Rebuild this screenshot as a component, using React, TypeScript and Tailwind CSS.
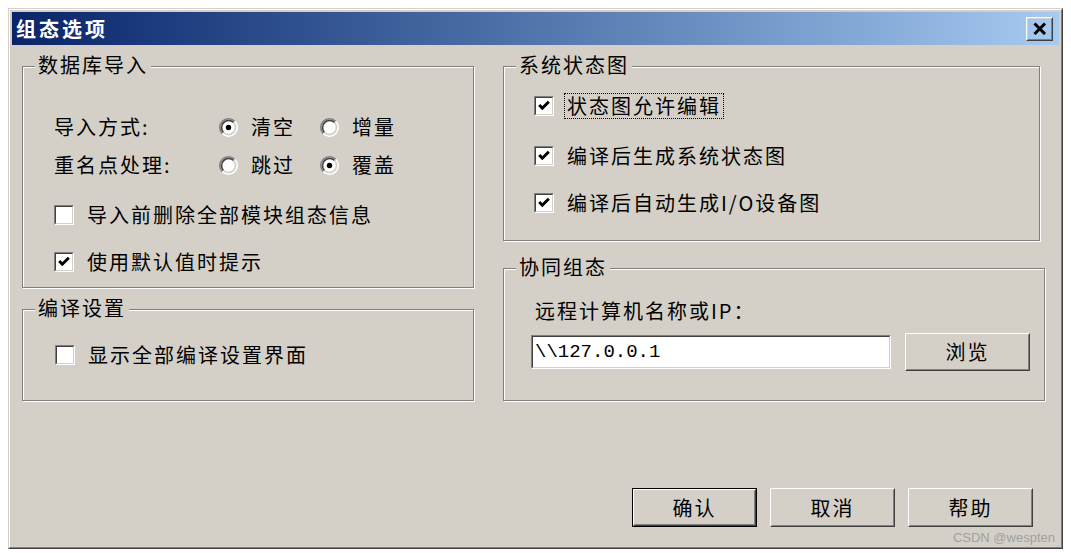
import React from 'react';

type BoxProps = { className?: string; children?: React.ReactNode };

const Raised: React.FC<BoxProps & { isDefault?: boolean }> = ({ className = '', isDefault, children }) => (
  <div className={`${isDefault ? 'border border-black' : ''} ${className}`}>
    <div className="h-full border border-t-white border-l-white border-r-[#404040] border-b-[#404040]">
      <div className="h-full flex items-center justify-center border border-t-[#d4d0c8] border-l-[#d4d0c8] border-r-[#808080] border-b-[#808080]">
        {children}
      </div>
    </div>
  </div>
);

const Sunken: React.FC<BoxProps> = ({ className = '', children }) => (
  <div className={`border border-t-[#808080] border-l-[#808080] border-r-white border-b-white ${className}`}>
    <div className="h-full border border-t-[#404040] border-l-[#404040] border-r-[#d4d0c8] border-b-[#d4d0c8] bg-white flex items-center">
      {children}
    </div>
  </div>
);

const GroupBox: React.FC<BoxProps & { title: string }> = ({ title, className = '', children }) => (
  <div className={`border border-[#808080] shadow-[1px_1px_0_#fff,inset_1px_1px_0_#fff] ${className}`}>
    <div className="-mt-[13px] ml-[12px] w-fit bg-[#d4d0c8] px-[3px] leading-[22px]">{title}</div>
    {children}
  </div>
);

const Radio: React.FC<{ checked?: boolean; label: string }> = ({ checked, label }) => (
  <div className="w-[101px] flex items-center gap-[13px]">
    <svg width="19" height="19" viewBox="0 0 12 12">
      <circle cx="6" cy="6" r="4.6" fill="#fff" />
      <path d="M2.11 9.89 A5.5 5.5 0 0 1 9.89 2.11" fill="none" stroke="#808080" />
      <path d="M9.89 2.11 A5.5 5.5 0 0 1 2.11 9.89" fill="none" stroke="#fff" />
      <path d="M2.82 9.18 A4.5 4.5 0 0 1 9.18 2.82" fill="none" stroke="#404040" />
      <path d="M9.18 2.82 A4.5 4.5 0 0 1 2.82 9.18" fill="none" stroke="#d4d0c8" />
      {checked && <circle cx="6" cy="6" r="1.7" fill="#000" />}
    </svg>
    <span>{label}</span>
  </div>
);

const CheckRow: React.FC<{ checked?: boolean; label: string; focused?: boolean; className?: string }> = ({
  checked,
  label,
  focused,
  className = '',
}) => (
  <div className={`h-[26px] flex items-center ${className}`}>
    <Sunken className="w-[20px] h-[20px]">
      {checked && (
        <svg width="16" height="16" viewBox="0 0 16 16">
          <path d="M3.2 7 L6.3 10.2 L12.8 3.8" fill="none" stroke="#000" strokeWidth="3" />
        </svg>
      )}
    </Sunken>
    {focused ? (
      <span className="ml-[10px] border border-dotted border-black px-[2px] leading-[24px]">{label}</span>
    ) : (
      <span className="ml-[13px]">{label}</span>
    )}
  </div>
);

const App: React.FC = () => {
  return (
    <div className="min-h-screen bg-white pl-[8px] pt-[8px] text-[20px] tracking-[2px] text-black font-['Noto_Sans_CJK_SC','Noto_Sans',sans-serif]">
      <div className="relative w-[1055px] h-[541px] border border-t-[#d4d0c8] border-l-[#d4d0c8] border-r-[#404040] border-b-[#404040]">
        <div className="h-full flex flex-col border border-t-white border-l-white border-r-[#808080] border-b-[#808080] bg-[#d4d0c8] p-[2px]">
          {/* title bar */}
          <div className="h-[33px] flex items-center justify-between pl-[4px] pr-[6px] bg-linear-to-r from-[#0a246a] to-[#a6caf0]">
            <span className="text-white font-bold leading-none tracking-[3px]">组态选项</span>
            <Raised className="w-[27px] h-[24px]">
              <svg width="18" height="16" viewBox="0 0 18 16">
                <path d="M3.5 2.5 L14 13 M14 2.5 L3.5 13" stroke="#000" strokeWidth="3" />
              </svg>
            </Raised>
          </div>

          {/* body */}
          <div className="flex-1 flex flex-col pl-[10px] pt-[21px]">
            <div className="flex gap-[29px]">
              {/* left column */}
              <div className="w-[452px] flex flex-col">
                <GroupBox title="数据库导入" className="h-[222px]">
                  <div className="pl-[31px]">
                    <div className="mt-[38px] h-[26px] flex items-center">
                      <span className="w-[165px]">导入方式:</span>
                      <Radio checked label="清空" />
                      <Radio label="增量" />
                    </div>
                    <div className="mt-[12px] h-[26px] flex items-center">
                      <span className="w-[165px]">重名点处理:</span>
                      <Radio label="跳过" />
                      <Radio checked label="覆盖" />
                    </div>
                    <CheckRow className="mt-[24px]" label="导入前删除全部模块组态信息" />
                    <CheckRow className="mt-[21px]" checked label="使用默认值时提示" />
                  </div>
                </GroupBox>
                <GroupBox title="编译设置" className="mt-[21px] h-[92px]">
                  <div className="pl-[32px]">
                    <CheckRow className="mt-[23px]" label="显示全部编译设置界面" />
                  </div>
                </GroupBox>
              </div>

              {/* right column */}
              <div className="w-[542px] flex flex-col">
                <GroupBox title="系统状态图" className="w-[537px] h-[175px]">
                  <div className="pl-[30px]">
                    <CheckRow className="mt-[17px]" checked focused label="状态图允许编辑" />
                    <CheckRow className="mt-[24px]" checked label="编译后生成系统状态图" />
                    <CheckRow className="mt-[21px]" checked label="编译后自动生成I/O设备图" />
                  </div>
                </GroupBox>
                <GroupBox title="协同组态" className="mt-[27px] h-[133px]">
                  <div className="mt-[20px] h-[26px] pl-[31px] flex items-center">远程计算机名称或IP：</div>
                  <div className="mt-[9px] pl-[27px] flex items-center">
                    <Sunken className="w-[360px] h-[34px]">
                      <span className="pl-[2px] text-[19px] font-['Liberation_Mono',monospace] tracking-normal">\\127.0.0.1</span>
                    </Sunken>
                    <Raised className="ml-[14px] w-[125px] h-[38px]">浏览</Raised>
                  </div>
                </GroupBox>
              </div>
            </div>

            {/* buttons */}
            <div className="mt-[87px] flex justify-end gap-[13px] pr-[26px]">
              <Raised isDefault className="w-[125px] h-[39px]">确认</Raised>
              <Raised className="w-[125px] h-[39px]">取消</Raised>
              <Raised className="w-[125px] h-[39px]">帮助</Raised>
            </div>
          </div>
        </div>
        <span className="absolute right-[7px] bottom-[3px] text-[13px] leading-[14px] tracking-normal text-[#a0a0a0] font-['Liberation_Sans',sans-serif]">
          CSDN @wespten
        </span>
      </div>
    </div>
  );
};

export default App;
